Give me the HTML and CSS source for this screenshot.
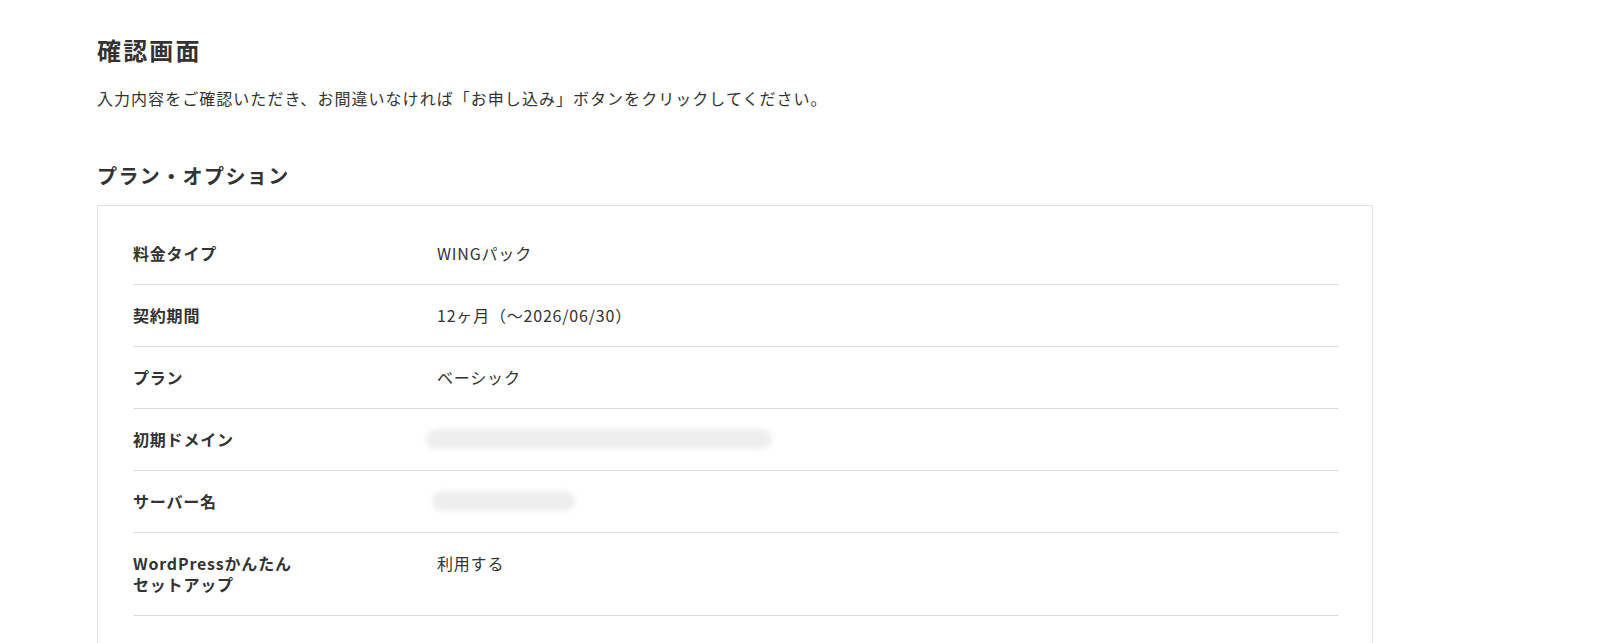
FILE: index.html
```html
<!DOCTYPE html>
<html lang="ja">
<head>
    <meta charset="UTF-8">
    <meta name="viewport" content="width=device-width, initial-scale=1.0">
    <title>確認画面</title>
    <link rel="stylesheet" href="styles.css">
</head>
<body>
    <main class="page">
        <h1 class="page-title">確認画面</h1>
        <p class="lead">入力内容をご確認いただき、お間違いなければ「お申し込み」ボタンをクリックしてください。</p>

        <h2 class="section-title">プラン・オプション</h2>
        <div class="confirm-box">
            <dl class="confirm-list">
                <div class="confirm-row">
                    <dt>料金タイプ</dt>
                    <dd>WINGパック</dd>
                </div>
                <div class="confirm-row">
                    <dt>契約期間</dt>
                    <dd>12ヶ月（〜2026/06/30）</dd>
                </div>
                <div class="confirm-row">
                    <dt>プラン</dt>
                    <dd>ベーシック</dd>
                </div>
                <div class="confirm-row">
                    <dt>初期ドメイン</dt>
                    <dd><span class="masked masked-domain"></span></dd>
                </div>
                <div class="confirm-row">
                    <dt>サーバー名</dt>
                    <dd><span class="masked masked-server"></span></dd>
                </div>
                <div class="confirm-row">
                    <dt>WordPressかんたん<br>セットアップ</dt>
                    <dd>利用する</dd>
                </div>
            </dl>
        </div>
    </main>
</body>
</html>
```

FILE: styles.css
```css
body {
    margin: 0;
    background-color: #fff;
    color: #333;
    font-family: "Noto Sans CJK JP", "Noto Sans", sans-serif;
    letter-spacing: 0.05em;
}

.page {
    width: 1276px;
    padding: 32px 0 0 97px;
}

.page-title {
    margin: 0 0 18px;
    font-size: 24px;
    line-height: 36px;
    font-weight: 700;
    letter-spacing: 0.09em;
}

.lead {
    margin: 0 0 51px;
    font-size: 16px;
    line-height: 24px;
    letter-spacing: 0.065em;
}

.section-title {
    margin: 0 0 14px;
    font-size: 20px;
    line-height: 30px;
    font-weight: 700;
    letter-spacing: 0.07em;
}

.confirm-box {
    border: 1px solid #e3e3e3;
    padding: 17px 33px 40px 35px;
}

.confirm-list {
    margin: 0;
}

.confirm-row {
    display: grid;
    grid-template-columns: 304px 1fr;
    padding: 20px 0;
    border-bottom: 1px solid #dedede;
    font-size: 16px;
    line-height: 21px;
}

.confirm-row dt {
    font-weight: 700;
}

.confirm-row dd {
    margin: 0;
}

.masked {
    display: block;
    height: 20px;
    border-radius: 10px;
    background-color: #eeeeee;
    filter: blur(2.5px);
}

.masked-domain {
    width: 346px;
    margin-left: -11px;
}

.masked-server {
    width: 143px;
    margin-left: -5px;
}
```
